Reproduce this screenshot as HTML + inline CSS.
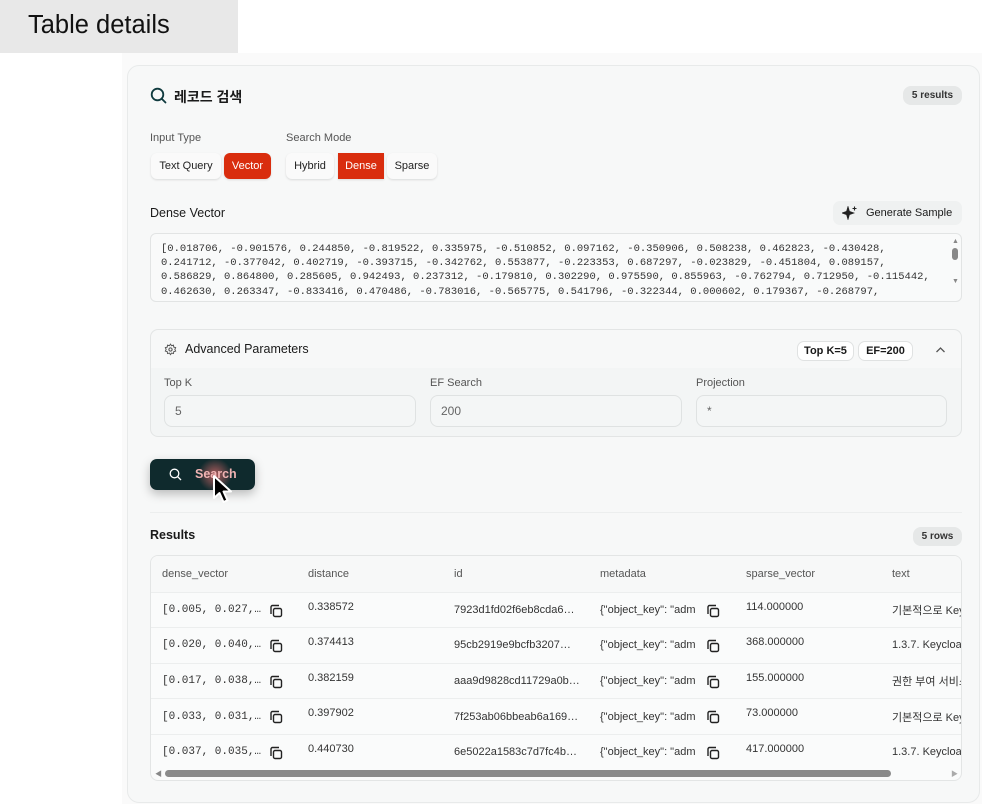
<!DOCTYPE html>
<html><head><meta charset="utf-8"><style>
*{box-sizing:border-box;margin:0;padding:0}
body{width:982px;height:804px;overflow:hidden;background:#fff;font-family:"Liberation Sans","Noto Sans CJK KR",sans-serif;color:#1a1a1a;position:relative}
.abs{position:absolute}
.tab{left:0;top:0;width:238px;height:53px;background:#e8e8e8;font-size:25.5px;padding:11px 0 0 28px;color:#111}
.bgarea{left:122px;top:53px;width:860px;height:751px;background:#fafafa}
.card{left:127px;top:65px;width:853px;height:738px;background:#f7f8f8;border:1px solid #e8eaea;border-radius:12px}
.lbl{font-size:11px;color:#555}
.btn{height:26px;font-size:11px;line-height:26px;text-align:center;background:#fafafa;border-radius:6px;box-shadow:0 1px 2px rgba(0,0,0,.12);color:#222}
.red{background:#d92d0e;color:#fff}
.badge{background:#e6e8e8;border-radius:8px;font-size:10px;font-weight:bold;text-align:center;line-height:19px;color:#333}
.mono{font-family:"Liberation Mono","DejaVu Sans Mono",monospace}
.ta{left:150px;top:233px;width:812px;height:69px;background:#f9fafa;border:1px solid #e2e4e4;border-radius:6px;overflow:hidden;font-size:10.5px;line-height:14.2px;color:#333;padding:8px 20px 0 10px;white-space:pre}
.inp{height:32px;background:#f4f6f6;border:1px solid #dfe2e2;border-radius:8px;font-size:12px;color:#666;line-height:30px;padding-left:10px}
.chip{background:#fff;border:1px solid #e0e2e2;border-radius:7px;font-size:11px;font-weight:bold;line-height:18px;text-align:center}
table{border-collapse:collapse;font-size:11px;color:#333;table-layout:fixed;width:812px}
td{height:35.6px;border-top:1px solid #eceeee;vertical-align:middle;white-space:nowrap;overflow:hidden;padding-left:11px;position:relative}
.hdr td{height:36px;border-top:none;color:#555;background:#f7f8f8}
.cp{position:absolute;width:14px;height:14px}
.md{display:inline-block;width:96px;overflow:hidden;vertical-align:middle}
.m2{left:117px !important}
</style></head><body>
<div class="abs tab">Table details</div>
<div class="abs bgarea"></div>
<div class="abs card"></div>

<svg class="abs" style="left:150px;top:87px" width="17" height="17" viewBox="0 0 17 17"><circle cx="7.5" cy="7.5" r="5.8" fill="none" stroke="#0f3a3e" stroke-width="1.8"/><line x1="11.7" y1="11.7" x2="15.5" y2="15.5" stroke="#0f3a3e" stroke-width="1.8" stroke-linecap="round"/></svg>
<div class="abs" style="left:174px;top:87px;font-size:14px;font-weight:bold">레코드 검색</div>
<div class="abs badge" style="left:903px;top:86px;width:59px">5 results</div>

<div class="abs lbl" style="left:150px;top:132px">Input Type</div>
<div class="abs lbl" style="left:286px;top:132px">Search Mode</div>
<div class="abs btn" style="left:151px;top:153px;width:70px">Text Query</div>
<div class="abs btn red" style="left:224px;top:153px;width:47px">Vector</div>
<div class="abs btn" style="left:286px;top:153px;width:48px">Hybrid</div>
<div class="abs btn red" style="left:338px;top:153px;width:46px;border-radius:0">Dense</div>
<div class="abs btn" style="left:387px;top:153px;width:50px">Sparse</div>

<div class="abs" style="left:150px;top:206px;font-size:12.5px">Dense Vector</div>
<div class="abs" style="left:833px;top:201px;width:129px;height:24px;background:#eff1f1;border-radius:7px;font-size:11px;line-height:24px;padding-left:33px">Generate Sample</div>
<svg class="abs" style="left:842px;top:206px" width="16" height="14" viewBox="0 0 16 14"><path d="M6 1 L7.3 5.5 L11.5 7 L7.3 8.5 L6 13 L4.7 8.5 L0.5 7 L4.7 5.5Z" fill="#222" stroke="#222" stroke-width="1"/><path d="M12.5 0.5v4M10.5 2.5h4" stroke="#222" stroke-width="1.1"/></svg>
<div class="abs ta mono">[0.018706, -0.901576, 0.244850, -0.819522, 0.335975, -0.510852, 0.097162, -0.350906, 0.508238, 0.462823, -0.430428,
0.241712, -0.377042, 0.402719, -0.393715, -0.342762, 0.553877, -0.223353, 0.687297, -0.023829, -0.451804, 0.089157,
0.586829, 0.864800, 0.285605, 0.942493, 0.237312, -0.179810, 0.302290, 0.975590, 0.855963, -0.762794, 0.712950, -0.115442,
0.462630, 0.263347, -0.833416, 0.470486, -0.783016, -0.565775, 0.541796, -0.322344, 0.000602, 0.179367, -0.268797,</div>
<div class="abs" style="left:952px;top:238px;width:6px;height:6px;font-size:7px;color:#888">▲</div>
<div class="abs" style="left:952px;top:248px;width:6px;height:12px;background:#888;border-radius:3px"></div>
<div class="abs" style="left:952px;top:278px;font-size:7px;color:#888">▼</div>

<div class="abs" style="left:150px;top:329px;width:812px;height:108px;border:1px solid #e3e5e5;border-radius:8px;background:#f3f5f5"></div>
<div class="abs" style="left:151px;top:330px;width:810px;height:38px;background:#f7f8f8;border-radius:8px 8px 0 0"></div>
<svg class="abs" style="left:164px;top:343px" width="13" height="13" viewBox="0 0 24 24"><circle cx="12" cy="12" r="3" fill="none" stroke="#555" stroke-width="2"/><path d="M12 2l2 3 3.5-1 .5 3.5 3.5 1-1.5 3.5 1.5 3-3.5 1-.5 3.5-3.5-1-2 3-2-3-3.5 1-.5-3.5-3.5-1 1.5-3-1.5-3.5 3.5-1 .5-3.5 3.5 1z" fill="none" stroke="#555" stroke-width="1.8"/></svg>
<div class="abs" style="left:185px;top:342px;font-size:12.5px">Advanced Parameters</div>
<div class="abs chip" style="left:797px;top:341px;width:57px">Top K=5</div>
<div class="abs chip" style="left:858px;top:341px;width:55px">EF=200</div>
<svg class="abs" style="left:935px;top:346px" width="11" height="8" viewBox="0 0 11 8"><path d="M1.5 6 L5.5 2 L9.5 6" fill="none" stroke="#555" stroke-width="1.3"/></svg>
<div class="abs lbl" style="left:164px;top:377px">Top K</div>
<div class="abs lbl" style="left:430px;top:377px">EF Search</div>
<div class="abs lbl" style="left:696px;top:377px">Projection</div>
<div class="abs inp" style="left:164px;top:395px;width:252px">5</div>
<div class="abs inp" style="left:430px;top:395px;width:252px">200</div>
<div class="abs inp" style="left:696px;top:395px;width:251px">*</div>

<div class="abs" style="left:150px;top:459px;width:105px;height:31px;background:#0f2a2d;border-radius:7px;box-shadow:0 4px 10px rgba(0,0,0,.25)"></div>
<div class="abs" style="left:198px;top:458px;width:34px;height:34px;border-radius:50%;background:radial-gradient(circle,rgba(230,110,110,.75),rgba(230,110,110,0) 70%)"></div>
<svg class="abs" style="left:169px;top:468px" width="13" height="13" viewBox="0 0 13 13"><circle cx="5.5" cy="5.5" r="4.3" fill="none" stroke="#fff" stroke-width="1.3"/><line x1="8.7" y1="8.7" x2="12" y2="12" stroke="#fff" stroke-width="1.3"/></svg>
<div class="abs" style="left:195px;top:467px;font-size:12.5px;font-weight:bold;color:#f0b3b3">Search</div>
<svg class="abs" style="left:212px;top:474px" width="26" height="34" viewBox="0 0 26 34"><path d="M2 2 L2 24 L7.5 19 L11.5 28 L15.5 26.3 L11.5 17.5 L19 17.5 Z" fill="#000" stroke="#fff" stroke-width="2" stroke-linejoin="round"/></svg>

<div class="abs" style="left:150px;top:512px;width:812px;height:1px;background:#eceeee"></div>
<div class="abs" style="left:150px;top:528px;font-size:12.5px;font-weight:bold">Results</div>
<div class="abs badge" style="left:913px;top:527px;width:49px">5 rows</div>

<div class="abs" style="left:150px;top:555px;width:812px;height:226px;border:1px solid #e3e5e5;border-radius:8px;background:#fafbfb;overflow:hidden">
<table>
<colgroup><col style="width:146px"><col style="width:146px"><col style="width:146px"><col style="width:146px"><col style="width:146px"><col style="width:82px"></colgroup>
<tr class="hdr"><td>dense_vector</td><td>distance</td><td>id</td><td>metadata</td><td>sparse_vector</td><td>text</td></tr>
<tr><td class="mono">[0.005, 0.027,…<svg class="cp" style="left:118px;top:11px" viewBox="0 0 14 14"><rect x="4.5" y="4.5" width="8" height="8" rx="1.5" fill="none" stroke="#222" stroke-width="1.4"/><path d="M2 10V3a1.5 1.5 0 0 1 1.5-1.5H10" fill="none" stroke="#222" stroke-width="1.4"/></svg></td><td style="vertical-align:top;padding-top:8px">0.338572</td><td>7923d1fd02f6eb8cda6…</td><td><span class="md">{"object_key": "admin</span><svg class="cp m2" style="left:108px;top:11px" viewBox="0 0 14 14"><rect x="4.5" y="4.5" width="8" height="8" rx="1.5" fill="none" stroke="#222" stroke-width="1.4"/><path d="M2 10V3a1.5 1.5 0 0 1 1.5-1.5H10" fill="none" stroke="#222" stroke-width="1.4"/></svg></td><td style="vertical-align:top;padding-top:8px">114.000000</td><td>기본적으로 Keyc</td></tr>
<tr><td class="mono">[0.020, 0.040,…<svg class="cp" style="left:118px;top:11px" viewBox="0 0 14 14"><rect x="4.5" y="4.5" width="8" height="8" rx="1.5" fill="none" stroke="#222" stroke-width="1.4"/><path d="M2 10V3a1.5 1.5 0 0 1 1.5-1.5H10" fill="none" stroke="#222" stroke-width="1.4"/></svg></td><td style="vertical-align:top;padding-top:8px">0.374413</td><td>95cb2919e9bcfb3207…</td><td><span class="md">{"object_key": "admin</span><svg class="cp m2" style="left:108px;top:11px" viewBox="0 0 14 14"><rect x="4.5" y="4.5" width="8" height="8" rx="1.5" fill="none" stroke="#222" stroke-width="1.4"/><path d="M2 10V3a1.5 1.5 0 0 1 1.5-1.5H10" fill="none" stroke="#222" stroke-width="1.4"/></svg></td><td style="vertical-align:top;padding-top:8px">368.000000</td><td>1.3.7. Keycloak</td></tr>
<tr><td class="mono">[0.017, 0.038,…<svg class="cp" style="left:118px;top:11px" viewBox="0 0 14 14"><rect x="4.5" y="4.5" width="8" height="8" rx="1.5" fill="none" stroke="#222" stroke-width="1.4"/><path d="M2 10V3a1.5 1.5 0 0 1 1.5-1.5H10" fill="none" stroke="#222" stroke-width="1.4"/></svg></td><td style="vertical-align:top;padding-top:8px">0.382159</td><td>aaa9d9828cd11729a0b…</td><td><span class="md">{"object_key": "admin</span><svg class="cp m2" style="left:108px;top:11px" viewBox="0 0 14 14"><rect x="4.5" y="4.5" width="8" height="8" rx="1.5" fill="none" stroke="#222" stroke-width="1.4"/><path d="M2 10V3a1.5 1.5 0 0 1 1.5-1.5H10" fill="none" stroke="#222" stroke-width="1.4"/></svg></td><td style="vertical-align:top;padding-top:8px">155.000000</td><td>권한 부여 서비스</td></tr>
<tr><td class="mono">[0.033, 0.031,…<svg class="cp" style="left:118px;top:11px" viewBox="0 0 14 14"><rect x="4.5" y="4.5" width="8" height="8" rx="1.5" fill="none" stroke="#222" stroke-width="1.4"/><path d="M2 10V3a1.5 1.5 0 0 1 1.5-1.5H10" fill="none" stroke="#222" stroke-width="1.4"/></svg></td><td style="vertical-align:top;padding-top:8px">0.397902</td><td>7f253ab06bbeab6a169…</td><td><span class="md">{"object_key": "admin</span><svg class="cp m2" style="left:108px;top:11px" viewBox="0 0 14 14"><rect x="4.5" y="4.5" width="8" height="8" rx="1.5" fill="none" stroke="#222" stroke-width="1.4"/><path d="M2 10V3a1.5 1.5 0 0 1 1.5-1.5H10" fill="none" stroke="#222" stroke-width="1.4"/></svg></td><td style="vertical-align:top;padding-top:8px">73.000000</td><td>기본적으로 Keyc</td></tr>
<tr><td class="mono">[0.037, 0.035,…<svg class="cp" style="left:118px;top:11px" viewBox="0 0 14 14"><rect x="4.5" y="4.5" width="8" height="8" rx="1.5" fill="none" stroke="#222" stroke-width="1.4"/><path d="M2 10V3a1.5 1.5 0 0 1 1.5-1.5H10" fill="none" stroke="#222" stroke-width="1.4"/></svg></td><td style="vertical-align:top;padding-top:8px">0.440730</td><td>6e5022a1583c7d7fc4b…</td><td><span class="md">{"object_key": "admin</span><svg class="cp m2" style="left:108px;top:11px" viewBox="0 0 14 14"><rect x="4.5" y="4.5" width="8" height="8" rx="1.5" fill="none" stroke="#222" stroke-width="1.4"/><path d="M2 10V3a1.5 1.5 0 0 1 1.5-1.5H10" fill="none" stroke="#222" stroke-width="1.4"/></svg></td><td style="vertical-align:top;padding-top:8px">417.000000</td><td>1.3.7. Keycloak</td></tr>
</table>
</div>
<div class="abs" style="left:155px;top:769px;font-size:7px;color:#888">◀</div>
<div class="abs" style="left:165px;top:770px;width:726px;height:7px;background:#8a8a8a;border-radius:4px"></div>
<div class="abs" style="left:951px;top:769px;font-size:7px;color:#aaa">▶</div>
</body></html>
